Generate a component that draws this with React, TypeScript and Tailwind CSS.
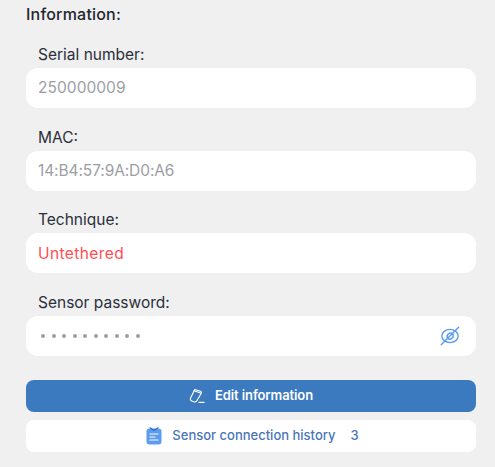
const fields = [
  { label: "Serial number:", value: "250000009", color: "text-[#9c9ea6]", track: "tracking-[0.05px]" },
  { label: "MAC:", value: "14:B4:57:9A:D0:A6", color: "text-[#9c9ea6]", track: "tracking-[-0.1px]" },
  { label: "Technique:", value: "Untethered", color: "text-[#ff4d55]", track: "tracking-[0.4px]" },
];

function EyeOff() {
  return (
    <svg width="20" height="20" viewBox="0 0 20 20" fill="none" stroke="#5b9bf0" strokeWidth="1.4" strokeLinecap="round">
      <ellipse cx="10" cy="10" rx="8.2" ry="6.6" />
      <path d="M12.8 8a3.3 3.3 0 0 0-4.9 4.4" />
      <path d="M7.6 12.2a3.3 3.3 0 0 0 5.2-3.9" />
      <path d="M18.6 1.2 1.2 18.8" />
    </svg>
  );
}

function PenIcon() {
  return (
    <svg width="16" height="16" viewBox="0 0 16 16" fill="none" stroke="#ffffff" strokeWidth="1.1" strokeLinejoin="round" strokeLinecap="round">
      <path d="M5.8 1.5 11.5 3.2c.9.3 1.2 1 .9 1.7L8 12.6c-.6 1.2-1.9 1.7-3.2 1.2l-2-.8C1.5 12.4 1 11.2 1.6 10z" />
      <path d="M5 2.8 11.6 5" />
      <path d="M10 14.4h5" />
    </svg>
  );
}

function HistoryIcon() {
  return (
    <svg width="16" height="18" viewBox="0 0 16 18" fill="none">
      <rect x="0.5" y="1.5" width="15" height="16" rx="3" fill="#5b9bf0" />
      <path d="M4 0.8 8 3.6l4-2.8" stroke="#2f6fc4" strokeWidth="1.2" strokeLinecap="round" strokeLinejoin="round" />
      <path d="M4 7h8M4 10h5M4 13h8" stroke="#ffffff" strokeWidth="1.2" strokeLinecap="round" />
    </svg>
  );
}

function Label({ text }: { text: string }) {
  return <div className="pl-3 text-[15.5px] leading-[20px] text-[#2b2f3a]">{text}</div>;
}

export default function App() {
  return (
    <div className="h-[467px] w-[495px] overflow-hidden bg-[#f0f0f0] px-[26px] pt-[4px] font-['Inter',sans-serif]">
      <h2 className="text-[16px] leading-[20px] font-medium tracking-[0.2px] text-[#23262f]">Information:</h2>

      <div className="mt-[21px] flex w-[450px] flex-col gap-[19.67px]">
        {fields.map((f) => (
          <div key={f.label} className="flex flex-col gap-[3px]">
            <Label text={f.label} />
            <div className={`flex h-[40px] items-center rounded-xl bg-white px-3 text-[15.5px] ${f.color} ${f.track}`}>
              {f.value}
            </div>
          </div>
        ))}

        <div className="flex flex-col gap-[3px]">
          <Label text="Sensor password:" />
          <div className="flex h-[40px] items-center justify-between rounded-xl bg-white pl-[15px] pr-[16px]">
            <div className="flex gap-[6.5px]">
              {Array.from({ length: 10 }).map((_, i) => (
                <span key={i} className="h-[4px] w-[4px] rounded-full bg-[#9c9ea6]" />
              ))}
            </div>
            <EyeOff />
          </div>
        </div>
      </div>

      <button className="mt-[24px] flex h-[32px] w-[450px] items-center justify-center gap-[10px] rounded-lg bg-[#3b7abf] text-[13px] font-semibold tracking-[-0.1px] text-white">
        <PenIcon />
        <span>Edit information</span>
      </button>

      <button className="mt-[8px] flex h-[32px] w-[450px] items-center justify-center rounded-lg bg-white pl-[3px] text-[13px] font-medium text-[#4a76b8]">
        <HistoryIcon />
        <span className="ml-[10px]">Sensor connection history</span>
        <span className="ml-[15px]">3</span>
      </button>
    </div>
  );
}
